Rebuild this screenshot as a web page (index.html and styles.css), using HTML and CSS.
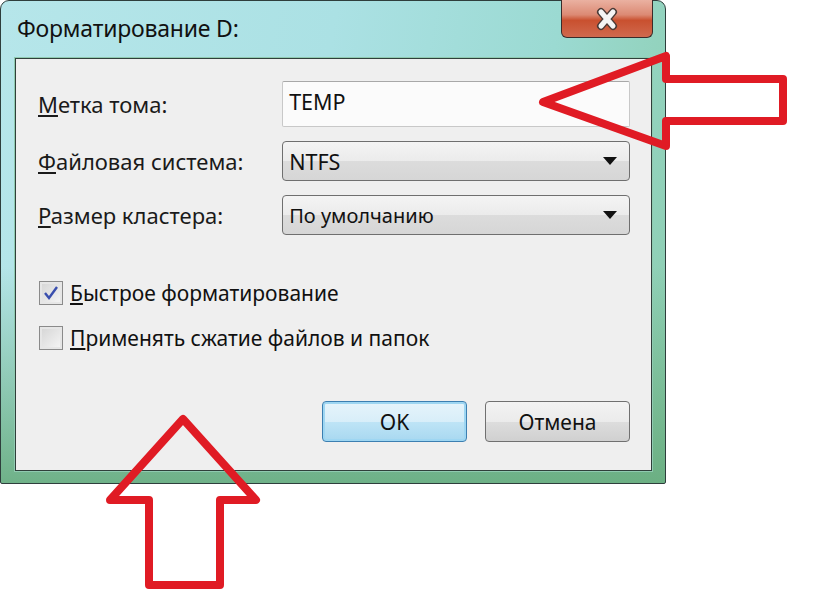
FILE: index.html
```html
<!DOCTYPE html>
<html lang="ru">
<head>
    <meta charset="utf-8">
    <title>Форматирование D:</title>
    <link rel="stylesheet" href="styles.css">
</head>
<body>
    <div class="window">
        <div class="titlebar">
            <span class="title">Форматирование D:</span>
            <div class="close">
                <svg width="34" height="24" viewBox="0 0 34 24">
                    <path d="M11 5 L23 19 M23 5 L11 19" stroke="#4a3a36" stroke-width="8" stroke-linecap="round"/>
                    <path d="M11 5 L23 19 M23 5 L11 19" stroke="#f4f4f4" stroke-width="5" stroke-linecap="round"/>
                </svg>
            </div>
        </div>

        <div class="client">
            <div class="row">
                <label class="label"><u>М</u>етка тома:</label>
                <div class="field textbox">TEMP</div>
            </div>
            <div class="row">
                <label class="label"><u>Ф</u>айловая система:</label>
                <div class="field combo">NTFS<span class="caret"></span></div>
            </div>
            <div class="row">
                <label class="label"><u>Р</u>азмер кластера:</label>
                <div class="field combo small">По умолчанию<span class="caret"></span></div>
            </div>

            <div class="checks">
                <div class="check">
                    <span class="box checked">
                        <svg width="16" height="16" viewBox="0 0 16 16">
                            <path d="M2 8 L6 13 L14 2" fill="none" stroke="#3a4fae" stroke-width="2.4"/>
                        </svg>
                    </span>
                    <span><u>Б</u>ыстрое форматирование</span>
                </div>
                <div class="check">
                    <span class="box"></span>
                    <span><u>П</u>рименять сжатие файлов и папок</span>
                </div>
            </div>

            <div class="buttons">
                <button class="btn default">OK</button>
                <button class="btn">Отмена</button>
            </div>
        </div>
    </div>

    <!-- red annotation arrows drawn over the screenshot -->
    <svg class="arrows" width="818" height="600" viewBox="0 0 818 600">
        <path d="M543 102 L666 56 L666 79 L783 79 L783 121 L666 121 L666 146 Z"
              fill="none" stroke="#e01b24" stroke-width="8" stroke-linejoin="round"/>
        <path d="M183 419 L256 500 L220 500 L220 585 L149 585 L149 500 L110 500 Z"
              fill="none" stroke="#e01b24" stroke-width="8" stroke-linejoin="round"/>
    </svg>
</body>
</html>
```

FILE: styles.css
```css
body {
    margin: 0;
    background-color: #fff;
    font-family: "Noto Sans", "Open Sans", sans-serif;
    color: #111;
    width: 818px;
    height: 600px;
    position: relative;
    overflow: hidden;
}

.window {
    width: 666px;
    height: 484px;
    box-sizing: border-box;
    border: 1px solid #2e3e3c;
    border-radius: 9px 9px 2px 2px;
    background:
        linear-gradient(to bottom, rgba(110, 178, 132, 0) 55%, rgba(104, 172, 126, 0.9) 100%),
        linear-gradient(100deg, #b6e6ea 0%, #abe1e4 45%, #9bdad2 75%, #8ccdae 100%);
    display: flex;
    flex-direction: column;
}

.titlebar {
    height: 57px;
    display: flex;
    align-items: flex-start;
    justify-content: space-between;
    padding-left: 16px;
    padding-right: 12px;
}

.title {
    font-size: 23px;
    margin-top: 11px;
    letter-spacing: -0.2px;
}

.close {
    width: 92px;
    height: 38px;
    margin-top: -1px;
    box-sizing: border-box;
    border: 1px solid #3b2c2a;
    border-top: none;
    border-radius: 0 0 6px 6px;
    background: linear-gradient(#eab1a1 0%, #dc8a74 40%, #c9502f 55%, #d0694e 100%);
    display: flex;
    align-items: center;
    justify-content: center;
}

.client {
    flex: 1;
    margin: 0 13px 12px 14px;
    background-color: #efefef;
    border: 1px solid #2f3f3a;
    box-shadow: 0 0 0 1px #8fcab0;
    padding: 22px 21px 0 22px;
    display: flex;
    flex-direction: column;
}

.row {
    display: flex;
    align-items: center;
    margin-bottom: 14px;
}

.label {
    width: 245px;
    font-size: 22px;
    color: #1a1a1a;
}

.field {
    width: 349px;
    box-sizing: border-box;
    font-size: 21.5px;
    display: flex;
    align-items: center;
    padding-left: 6px;
}

.field.small {
    font-size: 20px;
}

.textbox {
    height: 46px;
    border: 1px solid #c8c8c8;
    border-top-color: #a8a8a8;
    background-color: #fbfbfb;
    border-radius: 2px;
    padding-bottom: 6px;
}

.combo {
    height: 40px;
    border: 1px solid #6f6f6f;
    border-radius: 4px;
    background: linear-gradient(#f4f4f4 0%, #ebebeb 50%, #dcdcdc 51%, #d6d6d6 100%);
    justify-content: space-between;
    padding-right: 12px;
}

.caret {
    width: 0;
    height: 0;
    border-left: 7px solid transparent;
    border-right: 7px solid transparent;
    border-top: 8px solid #111;
}

.checks {
    margin-top: 30px;
    display: flex;
    flex-direction: column;
    gap: 17px;
}

.check {
    display: flex;
    align-items: center;
    gap: 7px;
    font-size: 21px;
    margin-left: 1px;
}

.box {
    width: 24px;
    height: 24px;
    box-sizing: border-box;
    border: 1px solid #8a8a8a;
    background: linear-gradient(135deg, #d4d4d4, #f6f6f6);
    box-shadow: inset 0 0 0 2px #e6e6e6;
    display: flex;
    align-items: center;
    justify-content: center;
}

.buttons {
    margin-top: 49px;
    display: flex;
    justify-content: flex-end;
    gap: 18px;
}

.btn {
    width: 145px;
    height: 41px;
    font-family: "Noto Sans", "Open Sans", sans-serif;
    font-size: 21px;
    color: #111;
    border: 1px solid #707070;
    border-radius: 4px;
    background: linear-gradient(#f3f3f3 0%, #ebebeb 50%, #dddddd 51%, #d0d0d0 100%);
}

.btn.default {
    border-color: #3c7fb1;
    background: linear-gradient(#e6f4fb 0%, #d8eef9 50%, #bee4f6 51%, #a8d8f0 100%);
    box-shadow: inset 0 0 0 2px #9ed6f2;
}

.arrows {
    position: absolute;
    left: 0;
    top: 0;
}
```
